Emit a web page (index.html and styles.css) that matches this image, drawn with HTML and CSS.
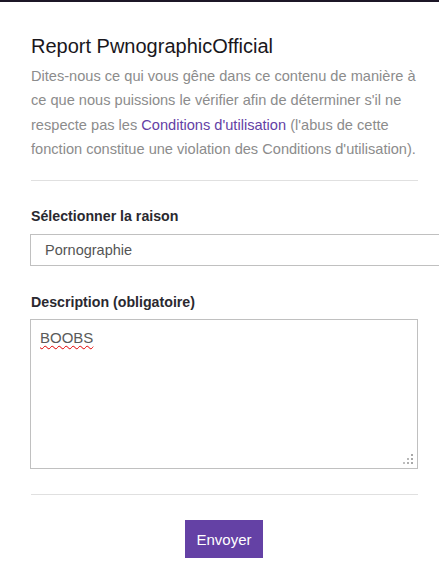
FILE: index.html
```html
<!DOCTYPE html>
<html lang="fr">
<head>
    <meta charset="UTF-8">
    <title>Report PwnographicOfficial</title>
    <link rel="stylesheet" href="styles.css">
</head>
<body>
    <div class="top-bar"></div>
    <form class="report-form">
        <h1>Report PwnographicOfficial</h1>
        <p class="intro">Dites-nous ce qui vous gêne dans ce contenu de manière à ce que nous puissions le vérifier afin de déterminer s'il ne respecte pas les <a href="#">Conditions d'utilisation</a> (l'abus de cette fonction constitue une violation des Conditions d'utilisation).</p>

        <hr class="divider">

        <label for="reason">Sélectionner la raison</label>
        <select id="reason" class="reason-select">
            <option>Pornographie</option>
        </select>

        <label for="description" class="label-description">Description (obligatoire)</label>
        <div class="textarea-wrap">
            <div id="description" class="description-box" role="textbox"><span class="misspelled">BOOBS</span></div>
            <svg class="grip" width="10" height="10" viewBox="0 0 10 10">
                <rect x="8" y="0" width="2" height="2" fill="#a8a8a8"/>
                <rect x="4" y="4" width="2" height="2" fill="#b8b8b8"/>
                <rect x="8" y="4" width="2" height="2" fill="#a8a8a8"/>
                <rect x="0" y="8" width="2" height="2" fill="#c0c0c0"/>
                <rect x="4" y="8" width="2" height="2" fill="#b0b0b0"/>
                <rect x="8" y="8" width="2" height="2" fill="#a8a8a8"/>
            </svg>
        </div>

        <hr class="divider divider-bottom">

        <div class="actions">
            <button type="submit">Envoyer</button>
        </div>
    </form>
</body>
</html>
```

FILE: styles.css
```css
body {
    margin: 0;
    font-family: "Liberation Sans", Arial, sans-serif;
    background-color: #ffffff;
    overflow: hidden;
}

.top-bar {
    height: 2px;
    background-color: #1c1626;
}

.report-form {
    padding: 32px 0 0 30px;
    width: 388px;
}

h1 {
    margin: 0;
    font-size: 20px;
    font-weight: normal;
    line-height: 24px;
    color: #19171c;
    padding-left: 1px;
}

.intro {
    margin: 6px 0 0;
    padding-left: 1px;
    font-size: 14.6px;
    line-height: 24.3px;
    color: #8c8c8c;
}

.intro a {
    color: #6441a5;
    text-decoration: none;
}

.divider {
    border: none;
    border-top: 1px solid #e0e0e0;
    margin: 19px 0 0 1px;
}

label {
    display: block;
    margin-top: 25px;
    padding-left: 1px;
    font-size: 14.2px;
    font-weight: bold;
    line-height: 20px;
    color: #2a2930;
}

.label-description {
    margin-top: 26px;
}

.reason-select {
    display: block;
    margin-top: 8px;
    width: 440px;
    height: 32px;
    padding: 0 14px;
    border: 1px solid #c0c0c0;
    border-radius: 0;
    background-color: #ffffff;
    font-family: "Liberation Sans", Arial, sans-serif;
    font-size: 14.5px;
    color: #555555;
    appearance: none;
    -webkit-appearance: none;
}

.textarea-wrap {
    position: relative;
    margin-top: 7px;
}

.description-box {
    box-sizing: border-box;
    height: 150px;
    padding: 8px 9px;
    border: 1px solid #c0c0c0;
    font-size: 15px;
    line-height: 20px;
    color: #5a5a5a;
}

.misspelled {
    text-decoration: underline wavy #e00000;
    text-decoration-thickness: 1px;
    text-underline-offset: 2px;
}

.grip {
    position: absolute;
    right: 5px;
    bottom: 5px;
}

.divider-bottom {
    margin-top: 25px;
}

.actions {
    display: flex;
    justify-content: center;
    margin-top: 25px;
}

button {
    width: 78px;
    height: 38px;
    padding: 0;
    border: none;
    background-color: #6441a5;
    color: #ffffff;
    font-family: "Liberation Sans", Arial, sans-serif;
    font-size: 15px;
    cursor: pointer;
}
```
